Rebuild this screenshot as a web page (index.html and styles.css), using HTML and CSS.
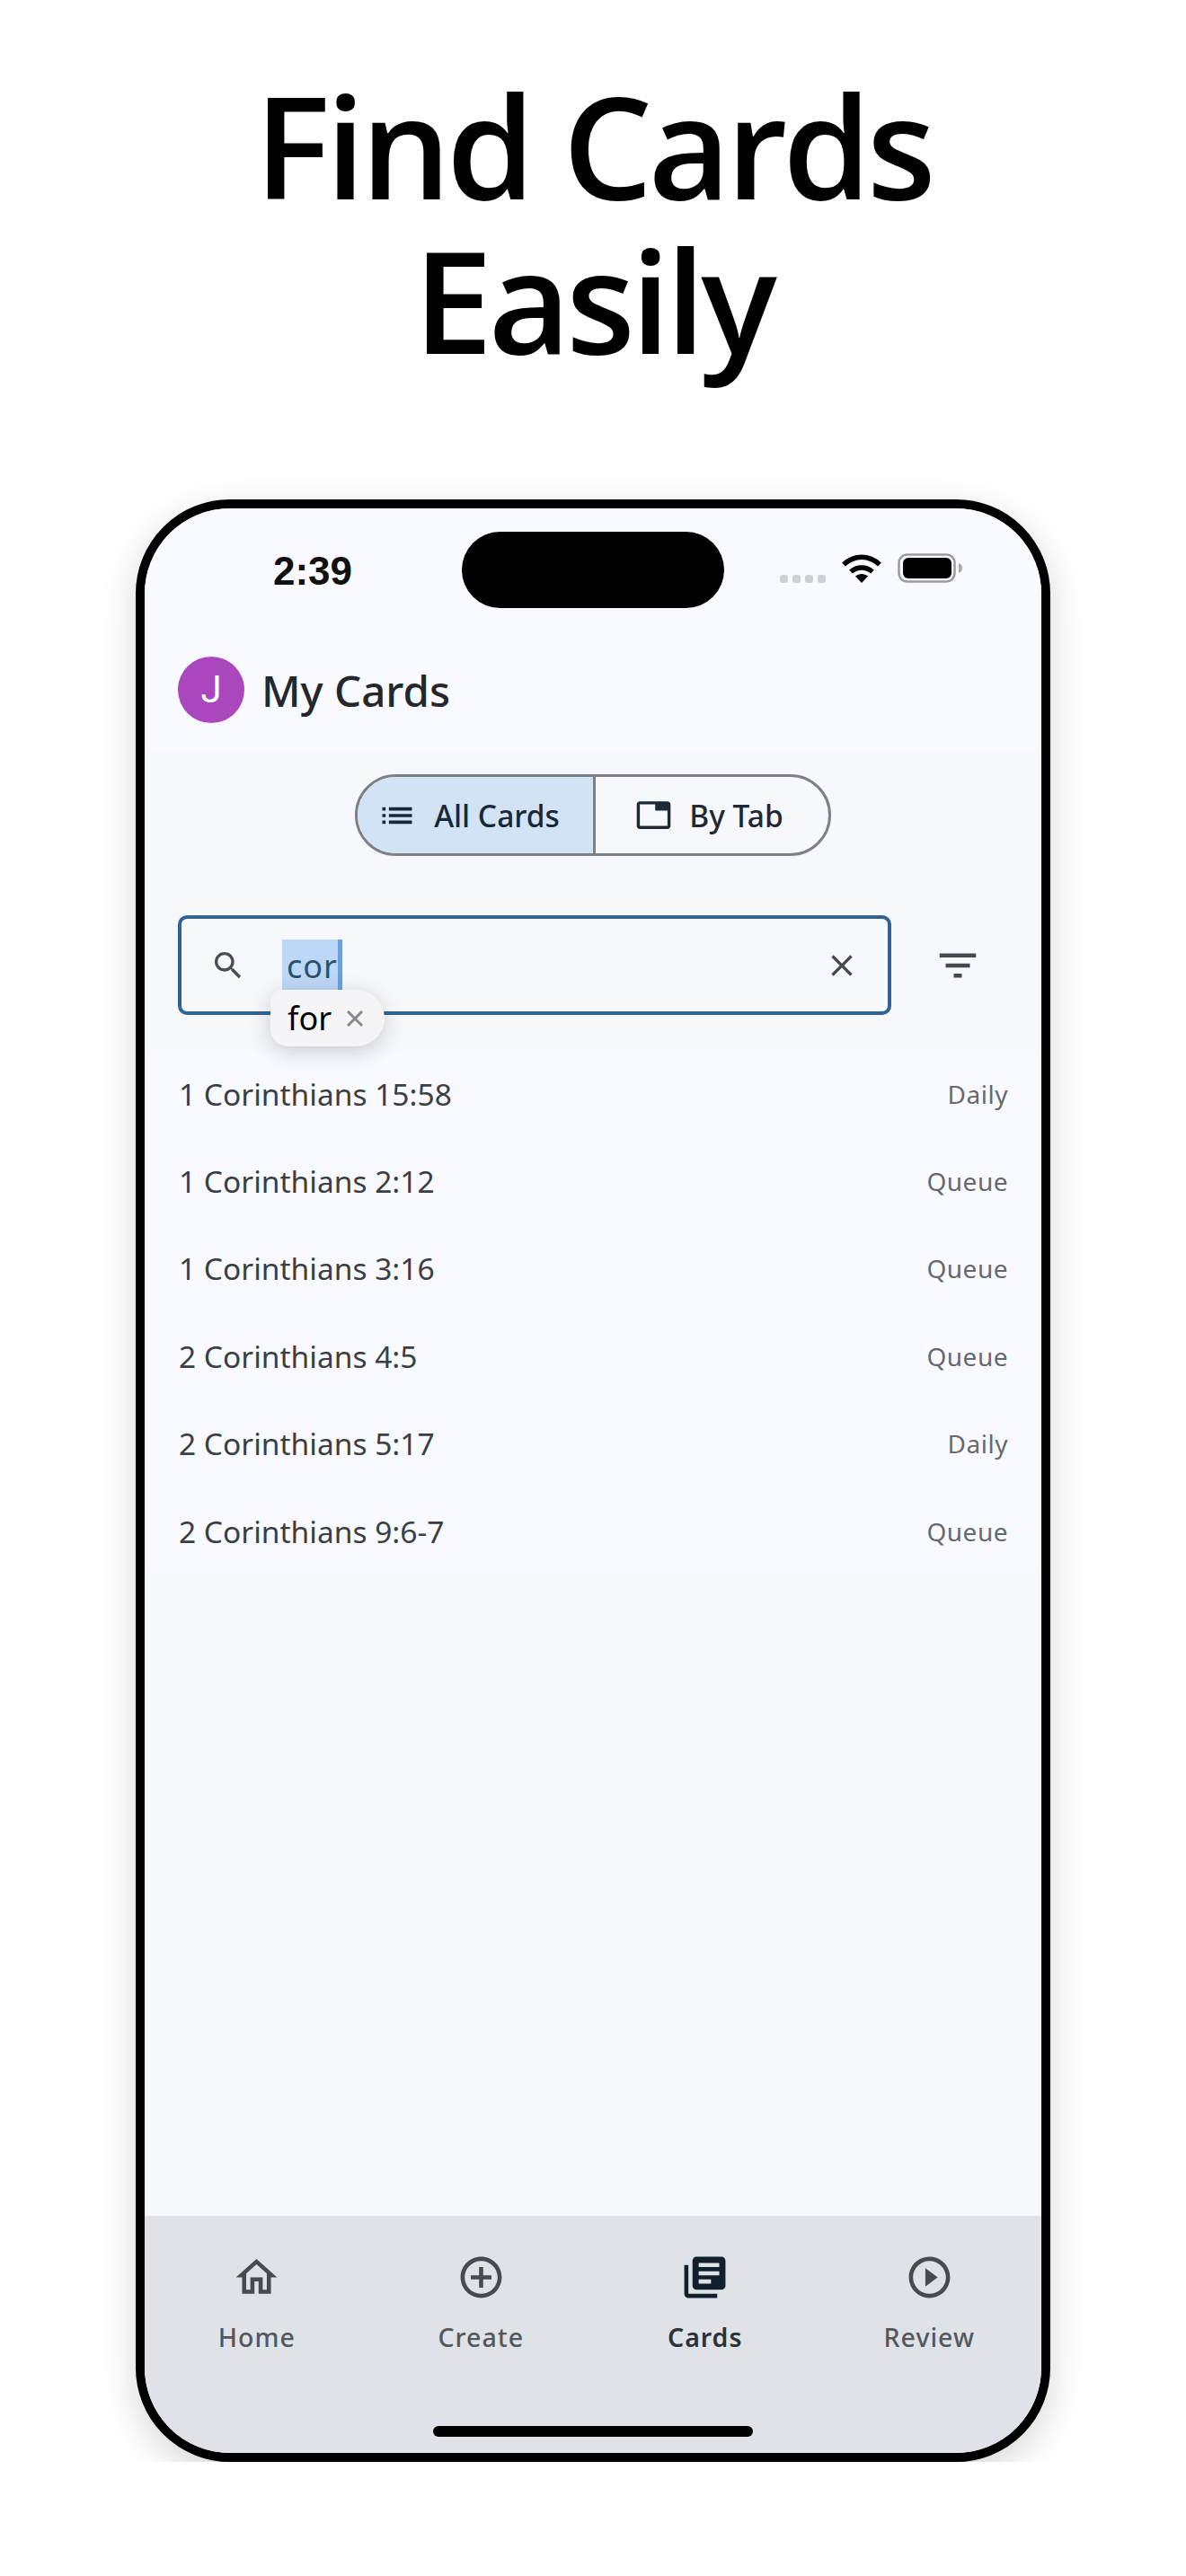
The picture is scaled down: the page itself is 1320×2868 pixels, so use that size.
FILE: index.html
```html
<!DOCTYPE html>
<html lang="en">
<head>
    <meta charset="UTF-8">
    <meta name="viewport" content="width=device-width, initial-scale=1.0">
    <title>Find Cards Easily</title>
    <link rel="stylesheet" href="styles.css">
</head>
<body>

<h1 class="headline">Find Cards<br>Easily</h1>

<div class="phone">
    <div class="island"></div>

    <div class="status">
        <span class="time">2:39</span>
        <div class="signal"><i></i><i></i><i></i><i></i></div>
        <svg class="wifi" viewBox="0 0 46 33">
            <path d="M3 12.500C15 1.500 31 1.500 43 12.500" fill="none" stroke="#000" stroke-width="5.500"/>
            <path d="M11 20.500C18 14.500 28 14.500 35 20.500" fill="none" stroke="#000" stroke-width="5.500"/>
            <path d="M16 25.500C20 22 26 22 30 25.500L23 33Z"/>
        </svg>
        <svg class="battery" viewBox="0 0 73 33">
            <rect x="1.500" y="1.500" width="62" height="30" rx="9" fill="none" stroke="#9a9a9a" stroke-width="2.500"/>
            <rect x="6" y="5" width="54" height="23" rx="6"/>
            <path d="M68 11c3 1 4 3 4 5.500s-1 4.500-4 5.500z" fill="#aaa"/>
        </svg>
    </div>

    <div class="header">
        <div class="avatar">J</div>
        <div class="title">My Cards</div>
    </div>

    <div class="controls">
        <div class="segments">
            <div class="segment active">
                <svg class="seg-icon" viewBox="0 0 24 24"><path d="M3 13h2v-2H3v2zm0 4h2v-2H3v2zm0-8h2V7H3v2zm4 4h14v-2H7v2zm0 4h14v-2H7v2zM7 7v2h14V7H7z"/></svg>
                All Cards
            </div>
            <div class="segment">
                <svg class="seg-icon tab-icon" viewBox="0 0 24 24"><path d="M21 3H3c-1.100 0-2 .9-2 2v14c0 1.100.9 2 2 2h18c1.100 0 2-.9 2-2V5c0-1.100-.9-2-2-2zm0 16H3V5h10v4h8v10z"/></svg>
                By Tab
            </div>
        </div>

        <div class="search-row">
            <div class="search">
                <svg class="search-icon" viewBox="0 0 24 24"><path d="M15.500 14h-.79l-.28-.27C15.410 12.590 16 11.110 16 9.500 16 5.910 13.090 3 9.500 3S3 5.910 3 9.500 5.910 16 9.500 16c1.610 0 3.090-.59 4.230-1.570l.27.28v.79l5 4.990L20.490 19l-4.990-5zm-6 0C7.010 14 5 11.990 5 9.500S7.010 5 9.500 5 14 7.010 14 9.500 11.990 14 9.500 14z"/></svg>
                <span class="query">cor</span>
                <svg class="clear-icon" viewBox="0 0 24 24"><path d="M19 6.410L17.590 5 12 10.590 6.410 5 5 6.410 10.590 12 5 17.590 6.410 19 12 13.410 17.590 19 19 17.590 13.410 12z"/></svg>
                <div class="suggest">for
                    <svg class="suggest-x" viewBox="0 0 20 20"><path d="M2 2L18 18M18 2L2 18"/></svg>
                </div>
            </div>
            <div class="filter">
                <svg viewBox="0 0 24 24"><path d="M10 18h4v-2h-4v2zM3 6v2h18V6H3zm3 7h12v-2H6v2z"/></svg>
            </div>
        </div>
    </div>

    <div class="list">
        <div class="row"><span class="ref">1 Corinthians 15:58</span><span class="kind">Daily</span></div>
        <div class="row"><span class="ref">1 Corinthians 2:12</span><span class="kind">Queue</span></div>
        <div class="row"><span class="ref">1 Corinthians 3:16</span><span class="kind">Queue</span></div>
        <div class="row"><span class="ref">2 Corinthians 4:5</span><span class="kind">Queue</span></div>
        <div class="row"><span class="ref">2 Corinthians 5:17</span><span class="kind">Daily</span></div>
        <div class="row"><span class="ref">2 Corinthians 9:6-7</span><span class="kind">Queue</span></div>
    </div>

    <div class="filler"></div>

    <div class="nav">
        <div class="nav-item">
            <svg viewBox="0 0 24 24"><path d="M12 5.690l5 4.500V18h-2v-6H9v6H7v-7.810l5-4.500M12 3L2 12h3v8h6v-6h2v6h6v-8h3L12 3z"/></svg>
            <span>Home</span>
        </div>
        <div class="nav-item">
            <svg viewBox="0 0 24 24"><path d="M13 7h-2v4H7v2h4v4h2v-4h4v-2h-4V7zm-1-5C6.480 2 2 6.480 2 12s4.480 10 10 10 10-4.480 10-10S17.520 2 12 2zm0 18c-4.410 0-8-3.590-8-8s3.590-8 8-8 8 3.590 8 8-3.590 8-8 8z"/></svg>
            <span>Create</span>
        </div>
        <div class="nav-item current">
            <svg viewBox="0 0 24 24"><path d="M4 6H2v14c0 1.100.9 2 2 2h14v-2H4V6zm16-4H8c-1.100 0-2 .9-2 2v12c0 1.100.9 2 2 2h12c1.100 0 2-.9 2-2V4c0-1.100-.9-2-2-2zm-1 9H9V9h10v2zm-4 4H9v-2h6v2zm4-8H9V5h10v2z"/></svg>
            <span>Cards</span>
        </div>
        <div class="nav-item">
            <svg viewBox="0 0 24 24"><path d="M10 16.500l6-4.500-6-4.500v9zM12 2C6.480 2 2 6.480 2 12s4.480 10 10 10 10-4.480 10-10S17.520 2 12 2zm0 18c-4.410 0-8-3.590-8-8s3.590-8 8-8 8 3.590 8 8-3.590 8-8 8z"/></svg>
            <span>Review</span>
        </div>
    </div>

    <div class="home-bar"></div>
</div>

</body>
</html>
```
FILE: styles.css
```css
body {
    margin: 0;
    background-color: #fff;
    font-family: "Noto Sans", "Open Sans", sans-serif;
}
.headline {
    margin: 0;
    padding-top: 75px;
    font-family: "Open Sans", sans-serif;
    font-size: 158px;
    line-height: 172px;
    font-weight: 600;
    text-align: center;
    letter-spacing: -5px;
    color: #000;
}
.phone {
    position: relative;
    display: flex;
    flex-direction: column;
    box-sizing: border-box;
    width: 1018px;
    height: 2185px;
    margin: 137px auto 0;
    border: 10px solid #000;
    border-radius: 105px;
    overflow: hidden;
    background-color: #f6f8fc;
    box-shadow: 0 12px 40px rgba(0, 0, 0, 0.16);
}
.island {
    position: absolute;
    top: 26px;
    left: 353px;
    width: 292px;
    height: 85px;
    border-radius: 43px;
    background-color: #000;
}
.status {
    display: flex;
    align-items: flex-end;
    box-sizing: border-box;
    height: 165px;
    padding: 50px 87px 82px 143px;
    background-color: #f9faff;
}
.time {
    flex: 1;
    margin-bottom: -3px;
    font-family: "Liberation Sans", sans-serif;
    font-size: 44px;
    line-height: 33px;
    font-weight: bold;
    color: #111;
}
.signal {
    display: flex;
    gap: 5px;
    margin-right: 17px;
}
.signal i {
    width: 9px;
    height: 9px;
    border-radius: 3px;
    background-color: #cfd0d3;
}
.wifi {
    width: 46px;
    height: 33px;
    margin-right: 17px;
}
.battery {
    width: 73px;
    height: 33px;
}
.header {
    display: flex;
    align-items: center;
    gap: 19px;
    padding: 0 37px 29px;
    background-color: #f9faff;
}
.avatar {
    width: 74px;
    height: 74px;
    border-radius: 50%;
    background-color: #ab47bc;
    color: #fff;
    font-family: Roboto, sans-serif;
    font-size: 42px;
    line-height: 74px;
    text-align: center;
}
.title {
    font-size: 47.500px;
    font-weight: 500;
    color: #24282c;
}
.controls {
    box-sizing: border-box;
    height: 335px;
    padding-top: 28px;
}
.segments {
    display: flex;
    box-sizing: border-box;
    width: 530px;
    height: 91px;
    margin: 0 auto;
    border: 3px solid #7d8186;
    border-radius: 46px;
    overflow: hidden;
}
.segment {
    display: flex;
    align-items: center;
    justify-content: center;
    gap: 19px;
    box-sizing: border-box;
    width: 259px;
    padding-right: 6px;
    font-size: 33.500px;
    font-weight: 500;
    color: #1f2933;
}
.segment.active {
    width: 265px;
    padding-right: 15px;
    border-right: 3px solid #7d8186;
    background-color: #d3e3f6;
    color: #16293a;
}
.seg-icon {
    width: 44px;
    height: 44px;
    fill: currentColor;
}
.tab-icon {
    width: 41px;
    height: 41px;
}
.search-row {
    display: flex;
    margin-top: 66px;
    padding: 0 19px 0 37px;
}
.search {
    position: relative;
    display: flex;
    flex: 1;
    align-items: center;
    box-sizing: border-box;
    height: 111px;
    padding-left: 32px;
    border: 4px solid #2f6494;
    border-radius: 10px;
}
.search-icon {
    width: 40px;
    height: 40px;
    fill: #4a4e53;
}
.query {
    box-sizing: border-box;
    width: 67px;
    height: 57px;
    margin-left: 40px;
    padding-left: 5px;
    border-right: 5px solid #6e9fda;
    background-color: #bdd7f6;
    font-size: 36px;
    line-height: 60px;
    letter-spacing: 1px;
    color: #2f4f6b;
}
.clear-icon {
    width: 40px;
    height: 40px;
    margin-left: auto;
    margin-right: 31px;
    fill: #45494e;
}
.suggest {
    position: absolute;
    top: 79px;
    left: 99px;
    display: flex;
    align-items: center;
    gap: 16px;
    box-sizing: border-box;
    width: 127px;
    height: 63px;
    padding-left: 19px;
    border-radius: 18px 42px 42px 26px;
    background-color: #f5f4f7;
    box-shadow: 0 6px 26px rgba(0, 0, 0, 0.18);
    font-size: 36px;
    color: #000;
    white-space: nowrap;
}
.suggest-x {
    width: 20px;
    height: 20px;
    fill: none;
    stroke: #88888c;
    stroke-width: 3;
}
.filter {
    display: flex;
    align-items: center;
    justify-content: center;
    width: 148px;
}
.filter svg {
    width: 54px;
    height: 54px;
    fill: #45494e;
}
.list {
    height: 582px;
    padding: 0 37px 0 38px;
    background-color: #f9faff;
}
.row {
    display: flex;
    align-items: center;
    justify-content: space-between;
    height: 97.400px;
}
.ref {
    font-size: 33.500px;
    color: #3b3f44;
}
.kind {
    font-size: 28px;
    letter-spacing: 0.5px;
    color: #66696e;
}
.filler {
    flex: 1;
}
.nav {
    display: grid;
    grid-template-columns: repeat(4, 1fr);
    height: 264px;
    background-color: #dfe2e7;
}
.nav-item {
    display: flex;
    flex-direction: column;
    align-items: center;
    padding-top: 41px;
    font-size: 28.500px;
    font-weight: 500;
    letter-spacing: 1px;
    color: #54585d;
}
.nav-item svg {
    width: 55px;
    height: 55px;
    margin-bottom: 20px;
    fill: #474b50;
}
.nav-item.current {
    font-weight: 600;
    color: #2c3238;
}
.nav-item.current svg {
    fill: #12202d;
}
.home-bar {
    position: absolute;
    bottom: 18px;
    left: 321px;
    width: 356px;
    height: 12px;
    border-radius: 6px;
    background-color: #000;
}
```
